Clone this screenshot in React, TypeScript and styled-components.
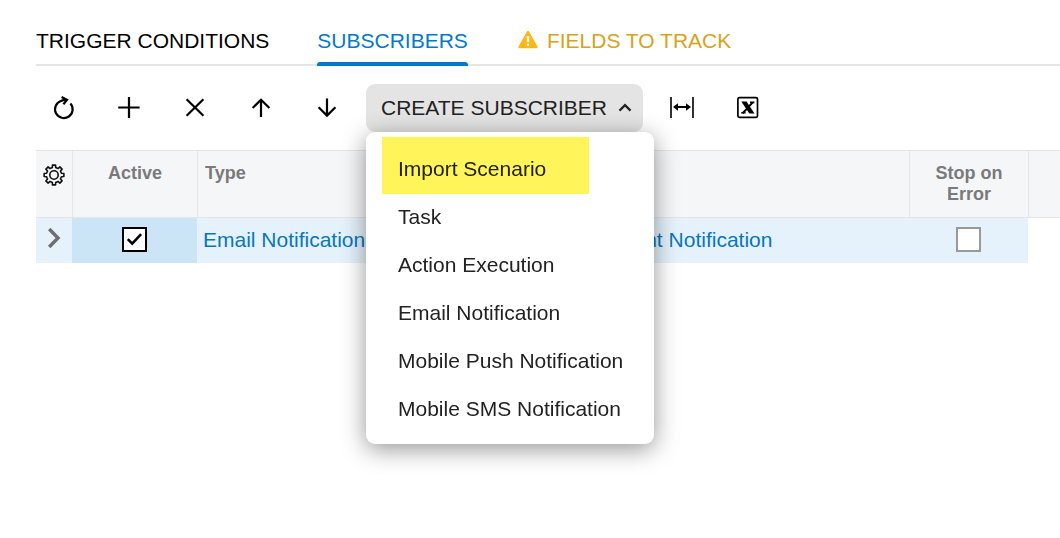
import React, { useState } from "react";
import styled, { createGlobalStyle } from "styled-components";

const GlobalStyle = createGlobalStyle`
  *, *::before, *::after { box-sizing: border-box; }
  body {
    margin: 0;
    background: #fff;
    color: #222;
    font-family: "Liberation Sans", Arial, sans-serif;
    font-size: 21px;
    line-height: 24px;
  }
  button {
    font: inherit;
    color: inherit;
    background: none;
    border: 0;
    padding: 0;
    cursor: pointer;
  }
`;

const Page = styled.main`
  width: 100%;
  min-height: 100vh;
`;

const TabList = styled.div`
  display: flex;
  gap: 48px;
  margin-left: 36px;
  padding-top: 29px;
  box-shadow: inset 0 -2px 0 #e6e6e6;
`;

const TabButton = styled.button<{ $color: string }>`
  display: block;
  color: ${(p) => p.$color};
  white-space: nowrap;
`;

const TabBar = styled.span<{ $active?: boolean }>`
  display: block;
  height: 4px;
  border-radius: 3px 3px 0 0;
  background: ${(p) => (p.$active ? "#027acc" : "transparent")};
`;

const TabBody = styled.span`
  display: flex;
  align-items: center;
  gap: 7px;
  height: 33px;
  padding-bottom: 9px;
`;

const Toolbar = styled.div`
  display: flex;
  align-items: center;
  height: 48px;
  margin: 18px 0;
  padding-left: 30px;
`;

const IconButton = styled.button`
  display: grid;
  place-items: center;
  width: 66px;
  height: 48px;
  color: #000;
`;

const MenuAnchor = styled.div`
  position: relative;
  margin: 0 6px;
`;

const MenuButton = styled.button`
  display: flex;
  align-items: center;
  justify-content: space-between;
  gap: 9px;
  width: 277px;
  height: 48px;
  padding: 0 9px 0 15px;
  border-radius: 9px;
  background: #e4e4e4;
  white-space: nowrap;
`;

const Menu = styled.div`
  position: absolute;
  top: 100%;
  left: 0;
  z-index: 2;
  width: 288px;
  padding: 13px 0 11px;
  border-radius: 9px;
  background: #fff;
  box-shadow: 0 5px 25px rgba(0, 0, 0, 0.42);
`;

const MenuItem = styled.button<{ $marked?: boolean }>`
  position: relative;
  display: block;
  width: 100%;
  height: 48px;
  padding: 0 32px;
  text-align: left;
  white-space: nowrap;

  &::before {
    content: "";
    display: ${(p) => (p.$marked ? "block" : "none")};
    position: absolute;
    top: -8px;
    left: 16px;
    width: 207px;
    height: 57px;
    background: #fff45a;
    mix-blend-mode: multiply;
  }
`;

const Grid = styled.table`
  width: calc(100% - 36px);
  margin-left: 36px;
  table-layout: fixed;
  border-collapse: separate;
  border-spacing: 0;
`;

const Column = styled.col<{ $width?: number }>`
  width: ${(p) => (p.$width ? `${p.$width}px` : "auto")};
`;

const HeadCell = styled.th<{ $center?: boolean; $plain?: boolean }>`
  height: 68px;
  padding: 12px 7px;
  border: solid #e3e5e7;
  border-width: 1px 0 1px ${(p) => (p.$plain ? 0 : 1)}px;
  background: #f5f6f8;
  color: #7a7a7a;
  font-size: 18px;
  line-height: 21px;
  font-weight: bold;
  text-align: ${(p) => (p.$center ? "center" : "left")};
  vertical-align: top;
`;

const HeadIconCell = styled(HeadCell)`
  padding: 12px 0;
`;

const HeadIconButton = styled.button`
  display: grid;
  place-items: center;
  width: 100%;
  height: 24px;
  color: #111;
`;

const Cell = styled.td<{ $bg?: string }>`
  height: 45px;
  padding: 0 6px 2px;
  background: ${(p) => p.$bg ?? "#e5f2fb"};
  white-space: nowrap;
  overflow: hidden;
`;

const CellLink = styled.a`
  color: #0877be;
  text-decoration: none;
`;

const RowMarker = styled.span`
  display: grid;
  place-items: center;
  padding-bottom: 3px;
`;

const CheckWrap = styled.label`
  display: grid;
  width: 25px;
  height: 25px;
  margin: 0 auto;
  > * { grid-area: 1 / 1; }
`;

const CheckInput = styled.input`
  appearance: none;
  width: 25px;
  height: 25px;
  margin: 0;
  border: 2px solid #999;
  background: #fff;
  &:checked { border-color: #000; }
  & + svg { visibility: hidden; pointer-events: none; }
  &:checked + svg { visibility: visible; }
`;

function CheckBox({ label, initial }: { label: string; initial: boolean }) {
  const [on, setOn] = useState(initial);
  return (
    <CheckWrap>
      <CheckInput
        type="checkbox"
        aria-label={label}
        checked={on}
        onChange={() => setOn(!on)}
      />
      <svg width="25" height="25" viewBox="0 0 25 25" fill="none" stroke="#000" strokeWidth="2.6">
        <path d="M5.8 12.2l4.4 4.4 8.9-9.4" />
      </svg>
    </CheckWrap>
  );
}

const line = { fill: "none", stroke: "currentColor", strokeWidth: 2.2 };

const RefreshIcon = () => (
  <svg width="24" height="24" viewBox="0 0 24 24" {...line}>
    <path d="M19.4 7.4A8.8 8.8 0 1 1 9.8 5Q12 4 15.2 3.9" />
    <path d="M10.6 1.1l5.4 2.8-3.6 4.4" />
  </svg>
);
const PlusIcon = () => (
  <svg width="24" height="24" viewBox="0 0 24 24" {...line}>
    <path d="M12 1v21M1.2 11.5h21.4" />
  </svg>
);
const CloseIcon = () => (
  <svg width="24" height="24" viewBox="0 0 24 24" {...line}>
    <path d="M3.6 3.2l16.8 16.6M20.4 3.2L3.6 19.8" />
  </svg>
);
const UpIcon = () => (
  <svg width="24" height="24" viewBox="0 0 24 24" {...line}>
    <path d="M12 21V4M3.6 12L12 3.7l8.4 8.3" />
  </svg>
);
const DownIcon = () => (
  <svg width="24" height="24" viewBox="0 0 24 24" {...line}>
    <path d="M12 2.5v17M3.6 11.3l8.4 8.3 8.4-8.3" />
  </svg>
);
const ChevronUpIcon = () => (
  <svg width="18" height="18" viewBox="0 0 18 18" {...line}>
    <path d="M3.5 11.6L9 6.1l5.5 5.5" />
  </svg>
);
const FitIcon = () => (
  <svg width="24" height="24" viewBox="0 0 24 24" fill="none" stroke="#000">
    <path d="M1 1v21M23 1v21" strokeWidth="1.6" />
    <path d="M5 11h14" strokeWidth="2" />
    <path d="M3 11l5-3.8v7.6zM21 11l-5-3.8v7.6z" fill="#000" stroke="none" />
  </svg>
);
const ExcelIcon = () => (
  <svg width="24" height="24" viewBox="0 0 24 24" fill="none">
    <rect x="1.9" y="1.7" width="19.6" height="19.6" rx="1.5" stroke="#000" strokeWidth="1.7" />
    <path fill="#000" d="M5.3 5.6h5.2l8 12h-5.2z" />
    <path stroke="#000" strokeWidth="2" d="M16.8 6.4l-4.4 4.6M11 12.6l-4.4 4.6" />
    <path stroke="#000" strokeWidth="1.6" d="M14 6.4h4.4M5.2 16.8h4.4" />
  </svg>
);
const WarningIcon = () => (
  <svg width="24" height="24" viewBox="0 0 24 24">
    <path
      fill="#fdb714"
      stroke="#fdb714"
      strokeWidth="2"
      strokeLinejoin="round"
      d="M12 2.8L3.3 18.2h17.4z"
    />
    <path d="M12 7v6" stroke="#fff" strokeWidth="2.4" />
    <circle cx="12" cy="15.8" r="1.4" fill="#fff" />
  </svg>
);

/* Eight teeth, each a flat crest between two flanks. */
const gearPath = (() => {
  const corners: string[] = [];
  for (let tooth = 0; tooth < 8; tooth++) {
    for (const [offset, radius] of [[-13, 7.6], [-9, 10], [9, 10], [13, 7.6]]) {
      const angle = ((tooth * 45 + offset) * Math.PI) / 180;
      corners.push(
        `${(12 + radius * Math.sin(angle)).toFixed(2)} ${(12 - radius * Math.cos(angle)).toFixed(2)}`
      );
    }
  }
  return `M${corners.join("L")}Z`;
})();

const GearIcon = () => (
  <svg width="24" height="24" viewBox="0 0 24 24" fill="none" stroke="currentColor" strokeWidth="1.6" strokeLinejoin="round">
    <path d={gearPath} />
    <circle cx="12" cy="12" r="4.2" />
  </svg>
);
const RowArrowIcon = () => (
  <svg width="24" height="24" viewBox="0 0 24 24" fill="none" stroke="#6e6e6e" strokeWidth="3.4">
    <path d="M7.2 3l8.8 9-8.8 9" />
  </svg>
);

const menuItems = [
  "Import Scenario",
  "Task",
  "Action Execution",
  "Email Notification",
  "Mobile Push Notification",
  "Mobile SMS Notification",
];

const tabs = [
  { label: "TRIGGER CONDITIONS", color: "#000" },
  { label: "SUBSCRIBERS", color: "#027acc" },
  { label: "FIELDS TO TRACK", color: "#d9a21b", warning: true },
];

export default function App() {
  const [active, setActive] = useState(1);
  const [open, setOpen] = useState(true);

  return (
    <Page>
      <GlobalStyle />
      <TabList role="tablist">
        {tabs.map((tab, i) => (
          <TabButton
            key={tab.label}
            role="tab"
            aria-selected={i === active}
            $color={tab.color}
            onClick={() => setActive(i)}
          >
            <TabBody>
              {tab.warning && <WarningIcon />}
              {tab.label}
            </TabBody>
            <TabBar $active={i === active} />
          </TabButton>
        ))}
      </TabList>

      <Toolbar role="toolbar" aria-label="Subscribers">
        <IconButton aria-label="Refresh"><RefreshIcon /></IconButton>
        <IconButton aria-label="Add"><PlusIcon /></IconButton>
        <IconButton aria-label="Delete"><CloseIcon /></IconButton>
        <IconButton aria-label="Move up"><UpIcon /></IconButton>
        <IconButton aria-label="Move down"><DownIcon /></IconButton>
        <MenuAnchor>
          <MenuButton aria-haspopup="menu" aria-expanded={open} onClick={() => setOpen(!open)}>
            CREATE SUBSCRIBER
            <ChevronUpIcon />
          </MenuButton>
          {open && (
            <Menu role="menu">
              {menuItems.map((item, i) => (
                <MenuItem key={item} role="menuitem" $marked={i === 0}>
                  {item}
                </MenuItem>
              ))}
            </Menu>
          )}
        </MenuAnchor>
        <IconButton aria-label="Fit columns"><FitIcon /></IconButton>
        <IconButton aria-label="Export to Excel"><ExcelIcon /></IconButton>
      </Toolbar>

      <Grid>
        <colgroup>
          <Column $width={36} />
          <Column $width={125} />
          <Column $width={406} />
          <Column />
          <Column $width={119} />
          <Column $width={32} />
        </colgroup>
        <thead>
          <tr>
            <HeadIconCell $plain>
              <HeadIconButton aria-label="Column settings"><GearIcon /></HeadIconButton>
            </HeadIconCell>
            <HeadCell $center>Active</HeadCell>
            <HeadCell>Type</HeadCell>
            <HeadCell />
            <HeadCell $center>Stop on Error</HeadCell>
            <HeadCell />
          </tr>
        </thead>
        <tbody>
          <tr>
            <Cell><RowMarker><RowArrowIcon /></RowMarker></Cell>
            <Cell $bg="#cbe4f6"><CheckBox label="Active" initial /></Cell>
            <Cell><CellLink href="#type">Email Notification</CellLink></Cell>
            <Cell><CellLink href="#subscriber">Event Notification</CellLink></Cell>
            <Cell><CheckBox label="Stop on Error" initial={false} /></Cell>
            <Cell $bg="transparent" />
          </tr>
        </tbody>
      </Grid>
    </Page>
  );
}
